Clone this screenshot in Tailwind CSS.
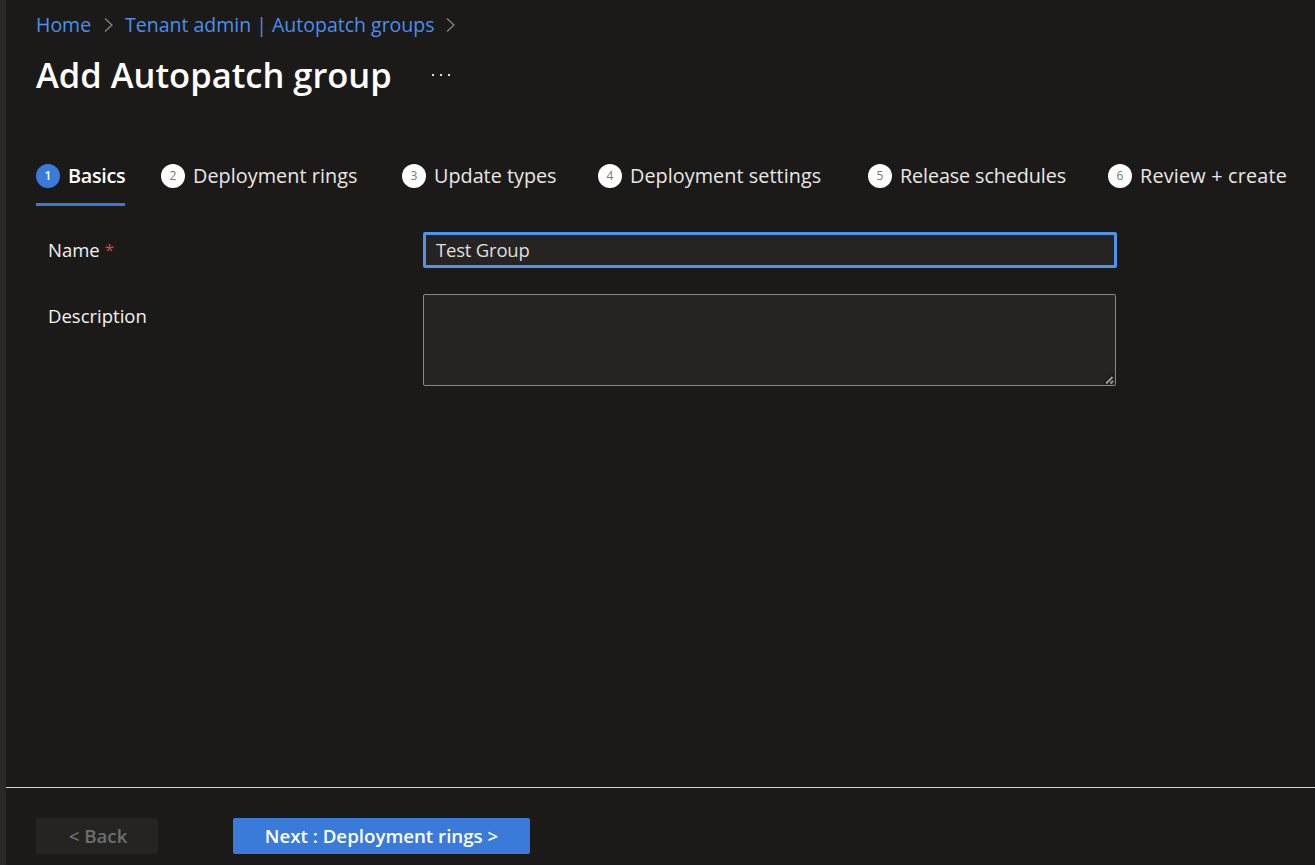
<!doctype html>
<html lang="en">
<head>
<meta charset="utf-8">
<title>Add Autopatch group</title>
<script src="https://cdn.jsdelivr.net/npm/@tailwindcss/browser@4"></script>
</head>
<body class="bg-[#1b1a19] font-['Open_Sans','Noto_Sans',sans-serif] overflow-hidden">
<div class="flex h-[865px] w-[1315px]">
  <div class="w-[6px] shrink-0 bg-[#292827]"></div>
  <div class="flex flex-1 flex-col">
    <!-- header -->
    <div class="pl-[30px]">
      <nav class="flex h-[26px] mt-[12px] items-center text-[19.5px] text-[#4a8fef] whitespace-nowrap">
        <a class="w-[56px]">Home</a>
        <svg class="ml-[11px] w-[12px] h-[16px]" viewBox="0 0 12 16" fill="none" stroke="#8a8886" stroke-width="1.2"><path d="M2 1.5 L9 8 L2 14.5"/></svg>
        <a class="ml-[10px] w-[309px]">Tenant admin | Autopatch groups</a>
        <svg class="ml-[11px] w-[12px] h-[16px]" viewBox="0 0 12 16" fill="none" stroke="#8a8886" stroke-width="1.2"><path d="M2 1.5 L9 8 L2 14.5"/></svg>
      </nav>
      <div class="mt-[13px] flex h-[48px] items-center">
        <h1 class="w-[356px] text-[34.5px] font-semibold text-white whitespace-nowrap">Add Autopatch group</h1>
        <span class="ml-[40px] flex gap-[6px]">
          <i class="block h-[2px] w-[2px] bg-[#e0dfdd]"></i><i class="block h-[2px] w-[2px] bg-[#e0dfdd]"></i><i class="block h-[2px] w-[2px] bg-[#e0dfdd]"></i>
        </span>
      </div>
    </div>

    <!-- wizard tabs -->
    <div class="mt-[49px] flex pl-[30px] text-[19.8px] text-[#e9e8e6] whitespace-nowrap">
      <div class="flex h-[58px] items-start border-b-[3px] border-[#3a78d4] pt-[16px]">
        <span class="flex h-[24px] w-[24px] items-center justify-center rounded-full bg-[#3a7bd9] text-[12px] font-semibold text-white">1</span>
        <span class="ml-[8px] w-[57px] h-[24px] leading-[24px] font-semibold tracking-[-0.3px] text-white">Basics</span>
      </div>
      <div class="ml-[36px] flex pt-[16px]">
        <span class="flex h-[24px] w-[24px] items-center justify-center rounded-full bg-white text-[12px] text-[#797775]">2</span>
        <span class="ml-[8px] w-[164px] h-[24px] leading-[24px] tracking-[0.06px]">Deployment rings</span>
      </div>
      <div class="ml-[45px] flex pt-[16px]">
        <span class="flex h-[24px] w-[24px] items-center justify-center rounded-full bg-white text-[12px] text-[#797775]">3</span>
        <span class="ml-[8px] w-[123px] h-[24px] leading-[24px]">Update types</span>
      </div>
      <div class="ml-[41px] flex pt-[16px]">
        <span class="flex h-[24px] w-[24px] items-center justify-center rounded-full bg-white text-[12px] text-[#797775]">4</span>
        <span class="ml-[8px] w-[191px] h-[24px] leading-[24px] tracking-[0.06px]">Deployment settings</span>
      </div>
      <div class="ml-[47px] flex pt-[16px]">
        <span class="flex h-[24px] w-[24px] items-center justify-center rounded-full bg-white text-[12px] text-[#797775]">5</span>
        <span class="ml-[8px] w-[166px] h-[24px] leading-[24px] tracking-[-0.12px]">Release schedules</span>
      </div>
      <div class="ml-[42px] flex pt-[16px]">
        <span class="flex h-[24px] w-[24px] items-center justify-center rounded-full bg-white text-[12px] text-[#797775]">6</span>
        <span class="ml-[8px] w-[147px] h-[24px] leading-[24px] tracking-[0.2px]">Review + create</span>
      </div>
    </div>

    <!-- form -->
    <div class="mt-[26px] flex-1 pl-[42px] text-[18.5px] text-[#f3f2f1]">
      <div class="flex">
        <label class="flex h-[36px] w-[375px] items-center">Name <span class="ml-[5px] text-[17px] text-[#c9504f]">*</span></label>
        <div class="flex h-[36px] w-[694px] items-center rounded-[2px] border-[3px] border-[#4f94ec] bg-[#252423] pl-[10px] tracking-[-0.2px] text-[#e1dfdd]">Test Group</div>
      </div>
      <div class="mt-[26px] flex">
        <label class="w-[375px] pt-[8px] leading-[28px]">Description</label>
        <div class="relative h-[92px] w-[693px] rounded-[2px] border border-[#8a8886] bg-[#252423]">
          <svg class="absolute bottom-0 right-0 w-[12px] h-[12px]" viewBox="0 0 12 12" fill="none" stroke-width="1.8">
            <path d="M1 11 L10 2" stroke="#111"/>
            <path d="M3 10.5 L9.5 4 M7.5 10.5 L10 8" stroke="#a19f9d"/>
          </svg>
        </div>
      </div>
    </div>

    <!-- footer -->
    <div class="h-[78px] border-t border-[#d8d6d4] pl-[30px] pt-[30px]">
      <div class="flex">
        <button class="h-[36px] w-[122px] rounded-[2px] bg-[#252423] pl-[2px] text-[18.7px] font-semibold text-[#6f6e6c]">&lt; Back</button>
        <button class="ml-[75px] h-[36px] w-[297px] rounded-[2px] bg-[#3a7bd9] text-[18.7px] font-semibold text-white">Next : Deployment rings &gt;</button>
      </div>
    </div>
  </div>
</div>
</body>
</html>
